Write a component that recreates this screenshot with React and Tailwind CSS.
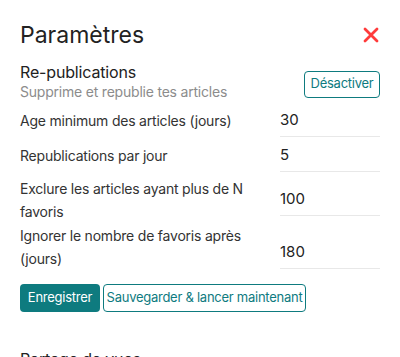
import React, { useState } from "react";

// per-row offsets so labels and values sit where the form puts them
const fields = [
  { label: "Age minimum des articles (jours)", value: "30", row: "", lbl: "mt-[5px]", inp: "" },
  { label: "Republications par jour", value: "5", row: "mt-[2px]", lbl: "mt-[5px]", inp: "" },
  { label: "Exclure les articles ayant plus de N favoris", value: "100", row: "mt-[5px]", lbl: "", inp: "mt-[6px]" },
  { label: "Ignorer le nombre de favoris après (jours)", value: "180", row: "mt-[1.5px]", lbl: "", inp: "mt-[11.5px]" },
];

const App = () => {
  const [values, setValues] = useState(fields.map((f) => f.value));

  return (
    <div className="w-[400px] h-[357px] overflow-hidden bg-white px-5 font-['Inter',sans-serif] text-[#222]">
      <div className="flex items-center justify-between pt-[21px]">
        <h2 className="text-[23px] leading-[28px] font-normal">Paramètres</h2>
        <button type="button" className="mr-[1px] text-[#ff3b3b]">
          <svg width="16" height="16" viewBox="0 0 16 16" fill="none">
            <path d="M2 2 L14 14 M14 2 L2 14" stroke="currentColor" strokeWidth="2.8" strokeLinecap="round" />
          </svg>
        </button>
      </div>

      <div className="mt-[12.5px] flex items-center justify-between">
        <div>
          <h3 className="text-[16px] leading-[20px] tracking-[-0.01em]">Re-publications</h3>
          <p className="text-[14px] leading-[20px] tracking-[-0.015em] text-[#8c8c8c]">
            Supprime et republie tes articles
          </p>
        </div>
        <button
          type="button"
          className="mt-[5px] h-[27px] w-[76px] rounded border border-[#0e7b7f] text-[13px] tracking-[-0.02em] text-[#0e7b7f]"
        >
          Désactiver
        </button>
      </div>

      <div className="mt-[2px] flex flex-col">
        {fields.map((f, i) => (
          <div key={f.label} className={"flex items-start justify-between " + f.row}>
            <label className={"w-[250px] text-[14px] leading-[23px] tracking-[-0.015em] text-[#333] " + f.lbl}>
              {f.label}
            </label>
            <input
              value={values[i]}
              onChange={(e) => {
                const next = [...values];
                next[i] = e.target.value;
                setValues(next);
              }}
              className={"h-[33px] w-[100px] border-b border-[#e8e8e8] bg-transparent text-[15px] text-[#222] outline-none " + f.inp}
            />
          </div>
        ))}
      </div>

      <div className="mt-[14px] flex gap-[3px]">
        <button type="button" className="h-[28px] w-[80px] rounded bg-[#0e7b7f] text-[13px] tracking-[-0.02em] text-white">
          Enregistrer
        </button>
        <button
          type="button"
          className="h-[28px] w-[203px] rounded border border-[#0e7b7f] text-[13px] tracking-[-0.02em] text-[#0e7b7f]"
        >
          Sauvegarder &amp; lancer maintenant
        </button>
      </div>

      <h3 className="mt-[37px] text-[16px] leading-[20px] tracking-[-0.01em]">Partage de vues</h3>
    </div>
  );
};

export default App;
